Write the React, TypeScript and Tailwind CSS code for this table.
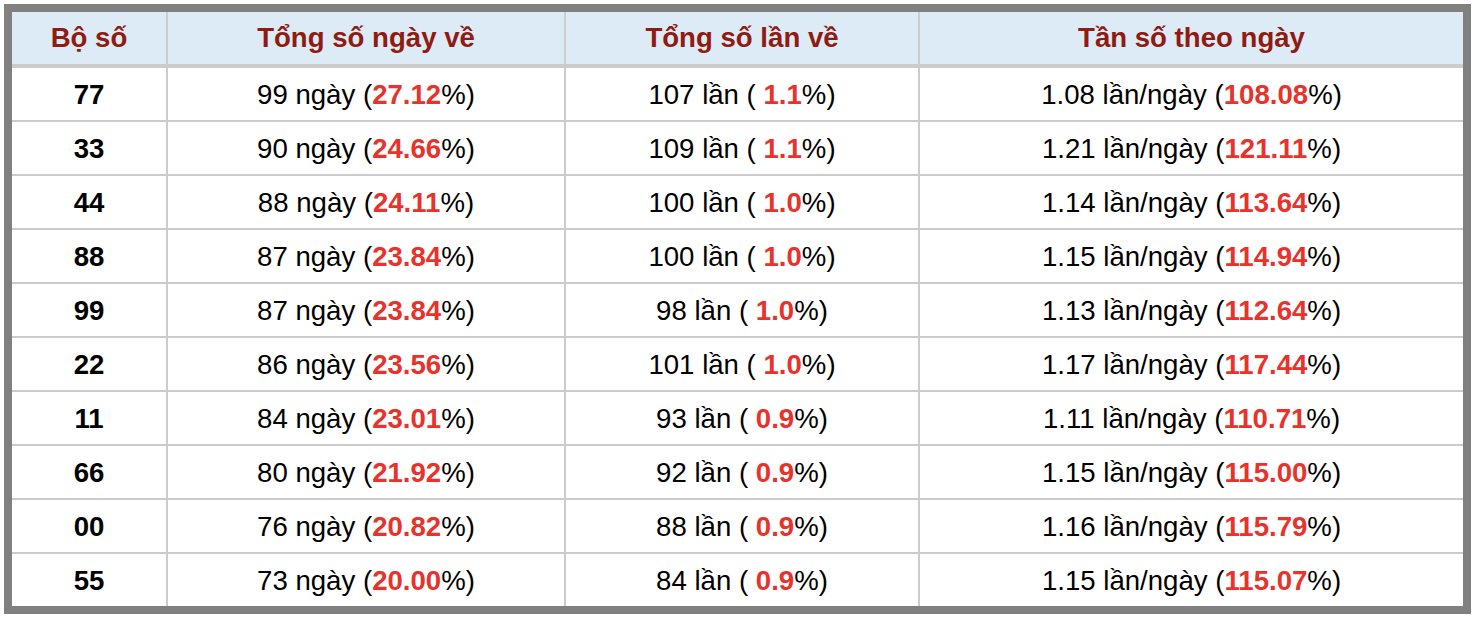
import React from 'react';

type Row = {
  bo: string;
  ngay: string;
  ngayPct: string;
  lan: string;
  lanPct: string;
  tanSo: string;
  tanSoPct: string;
};

const rows: Row[] = [
  { bo: '77', ngay: '99', ngayPct: '27.12', lan: '107', lanPct: '1.1', tanSo: '1.08', tanSoPct: '108.08' },
  { bo: '33', ngay: '90', ngayPct: '24.66', lan: '109', lanPct: '1.1', tanSo: '1.21', tanSoPct: '121.11' },
  { bo: '44', ngay: '88', ngayPct: '24.11', lan: '100', lanPct: '1.0', tanSo: '1.14', tanSoPct: '113.64' },
  { bo: '88', ngay: '87', ngayPct: '23.84', lan: '100', lanPct: '1.0', tanSo: '1.15', tanSoPct: '114.94' },
  { bo: '99', ngay: '87', ngayPct: '23.84', lan: '98', lanPct: '1.0', tanSo: '1.13', tanSoPct: '112.64' },
  { bo: '22', ngay: '86', ngayPct: '23.56', lan: '101', lanPct: '1.0', tanSo: '1.17', tanSoPct: '117.44' },
  { bo: '11', ngay: '84', ngayPct: '23.01', lan: '93', lanPct: '0.9', tanSo: '1.11', tanSoPct: '110.71' },
  { bo: '66', ngay: '80', ngayPct: '21.92', lan: '92', lanPct: '0.9', tanSo: '1.15', tanSoPct: '115.00' },
  { bo: '00', ngay: '76', ngayPct: '20.82', lan: '88', lanPct: '0.9', tanSo: '1.16', tanSoPct: '115.79' },
  { bo: '55', ngay: '73', ngayPct: '20.00', lan: '84', lanPct: '0.9', tanSo: '1.15', tanSoPct: '115.07' },
];

const headers = ['Bộ số', 'Tổng số ngày về', 'Tổng số lần về', 'Tần số theo ngày'];

const Pct = ({ value }: { value: string }) => (
  <span className="font-bold text-[#e8322b]">{value}</span>
);

export default function App() {
  return (
    <div className="min-h-screen bg-white p-1 font-['Liberation_Sans',Arial,sans-serif] text-[27.6px] text-black">
      <div className="grid w-[1467px] grid-cols-[154px_396px_352px_543px] gap-[2px] border-8 border-[#808080] bg-[#cccccc]">
        {headers.map(h => (
          <div
            key={h}
            className="mb-[2px] flex h-[52px] items-center justify-center bg-[#dcebf5] font-bold text-[#8f1b12]"
          >
            {h}
          </div>
        ))}

        {rows.map(r => (
          <React.Fragment key={r.bo}>
            <div className="flex h-[52px] items-center justify-center bg-white pt-[2px] font-bold">{r.bo}</div>
            <div className="flex h-[52px] items-center justify-center bg-white pt-[2px] whitespace-pre">
              {r.ngay} ngày (<Pct value={r.ngayPct} />%)
            </div>
            <div className="flex h-[52px] items-center justify-center bg-white pt-[2px] whitespace-pre">
              {r.lan} lần ( <Pct value={r.lanPct} />%)
            </div>
            <div className="flex h-[52px] items-center justify-center bg-white pt-[2px] whitespace-pre">
              {r.tanSo} lần/ngày (<Pct value={r.tanSoPct} />%)
            </div>
          </React.Fragment>
        ))}
      </div>
    </div>
  );
}
